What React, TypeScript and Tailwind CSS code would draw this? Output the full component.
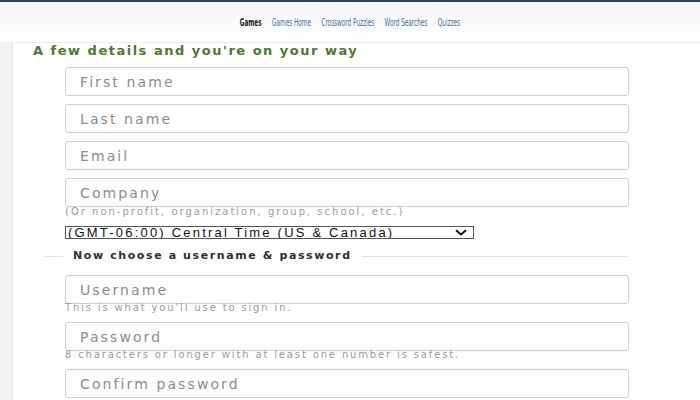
import React from "react";

const navLinks = ["Games Home", "Crossword Puzzles", "Word Searches", "Quizzes"];

const inputCls =
  "h-[29px] w-[564px] rounded-[3px] border border-[#cfcfcf] bg-white px-[14px] text-[14px] tracking-[2.1px] text-[#333] placeholder:text-[#8c8c8c] outline-none";

const Field = ({ placeholder, hint }: { placeholder: string; hint?: string }) => (
  <div className="flex flex-col">
    <input placeholder={placeholder} className={inputCls} />
    {hint && (
      <p className="text-[10px] leading-[8px] tracking-[1.85px] text-[#9a9a9a] whitespace-nowrap">{hint}</p>
    )}
  </div>
);

export default function App() {
  return (
    <div className="h-[400px] w-[700px] overflow-hidden bg-white font-['DejaVu_Sans',sans-serif]">
      {/* Top nav */}
      <div className="h-[43px] border-t-[2px] border-[#2c4660] bg-gradient-to-b from-[#f4f5f6] to-white border-b border-b-[#ececec]">
        <div className="flex h-[42px] items-center justify-center">
          <nav className="flex scale-x-[0.58] items-center gap-[18px] font-['DejaVu_Sans_Condensed',sans-serif] text-[11px] whitespace-nowrap">
            <span className="font-semibold text-[#222]">Games</span>
            {navLinks.map((l) => (
              <a key={l} href="#" className="text-[#3b6ea5]">
                {l}
              </a>
            ))}
          </nav>
        </div>
      </div>

      <div className="flex">
        {/* Left gutter */}
        <div className="h-[357px] w-[13px] border-r border-[#e4e4e4] bg-[#f3f3f3]" />

        <div className="flex flex-col pl-[20px]">
          <h2 className="mt-[1px] text-[13px] font-bold leading-[14px] tracking-[1.5px] text-[#4e7a2c] whitespace-nowrap">
            A few details and you're on your way
          </h2>

          <div className="mt-[9px] flex flex-col pl-[32px]">
            <div className="flex flex-col gap-[8px]">
              <Field placeholder="First name" />
              <Field placeholder="Last name" />
              <Field placeholder="Email" />
              <input placeholder="Company" className={inputCls} />
            </div>
            <p className="text-[10px] leading-[10px] tracking-[2px] text-[#9a9a9a] whitespace-nowrap">
              (Or non-profit, organization, group, school, etc.)
            </p>

            <div className="mt-[9px] flex h-[13px] w-[409px] items-center justify-between overflow-hidden border border-[#555] bg-white pl-[2px] pr-[6px] font-['Liberation_Sans',sans-serif] text-[13px] leading-none tracking-[2.2px] text-[#111] whitespace-nowrap">
              <span>(GMT-06:00) Central Time (US &amp; Canada)</span>
              <svg width="12" height="7" viewBox="0 0 12 7" className="shrink-0 text-[#111]">
                <path d="M1 1.2 L6 5.4 L11 1.2" fill="none" stroke="currentColor" strokeWidth="2" />
              </svg>
            </div>
          </div>

          <div className="mt-[10px] flex w-[596px] items-center pl-[10px]">
            <div className="h-px w-[20px] bg-[#e2e2e2]" />
            <span className="px-[10px] text-[11px] font-bold leading-[14px] tracking-[1.6px] text-[#2f2f2f] whitespace-nowrap">
              Now choose a username &amp; password
            </span>
            <div className="h-px flex-1 bg-[#e2e2e2]" />
          </div>

          <div className="mt-[12px] flex flex-col gap-[10px] pl-[32px]">
            <Field placeholder="Username" hint="This is what you'll use to sign in." />
            <Field placeholder="Password" hint="8 characters or longer with at least one number is safest." />
            <Field placeholder="Confirm password" />
          </div>
        </div>
      </div>
    </div>
  );
}
